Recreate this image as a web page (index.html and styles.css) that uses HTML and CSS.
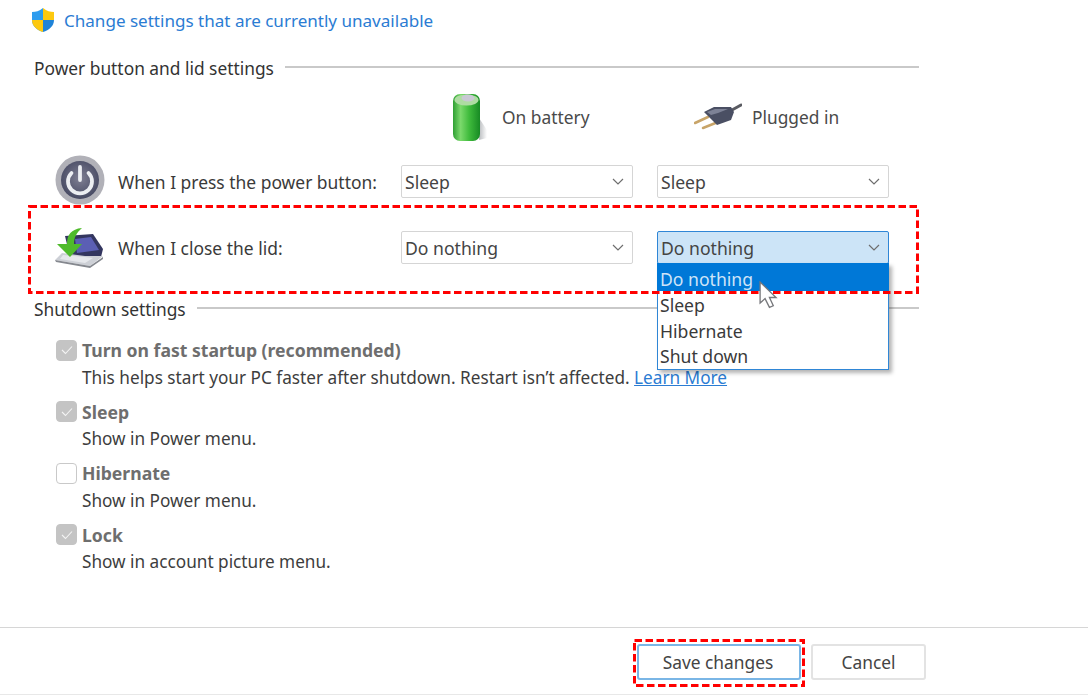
FILE: index.html
```html
<!DOCTYPE html>
<html lang="en">
<head>
<meta charset="utf-8">
<title>System Settings</title>
<link rel="stylesheet" href="styles.css">
</head>
<body>
<main class="page">
  <div class="change-row">
    <svg class="shield" viewBox="0 0 24 26" width="24" height="26">
      <path d="M12 1 C8 4 5 5 1 5 V13 C1 19 6 23 12 25 Z" fill="#2d9cee"/>
      <path d="M12 1 C16 4 19 5 23 5 V13 H12 Z" fill="#fdc90f"/>
      <path d="M1 13 H12 V25 C6 23 1 19 1 13 Z" fill="#fdc90f"/>
      <path d="M12 13 H23 C23 19 18 23 12 25 Z" fill="#1f83d8"/>
    </svg>
    <a class="link change-link">Change settings that are currently unavailable</a>
  </div>

  <div class="section-head head-power"><span>Power button and lid settings</span><i class="rule"></i></div>

  <div class="grid">
    <div class="col-head col-battery">
      <svg viewBox="0 0 36 50" width="36" height="50">
        <defs>
          <linearGradient id="bat" x1="0" x2="1" y1="0" y2="0">
            <stop offset="0" stop-color="#2f9f33"/><stop offset=".28" stop-color="#7bd96c"/>
            <stop offset=".6" stop-color="#3fbb3c"/><stop offset="1" stop-color="#178a24"/>
          </linearGradient>
          <linearGradient id="batsh" x1="0" x2="1" y1="0" y2="0">
            <stop offset="0" stop-color="#b9bcbf"/><stop offset="1" stop-color="#ffffff"/>
          </linearGradient>
        </defs>
        <path d="M28 26 L36 38 L36 46 L28 48 Z" fill="url(#batsh)"/>
        <rect x="2" y="2" width="27" height="47" rx="7" fill="url(#bat)"/>
        <ellipse cx="15.500" cy="8" rx="12" ry="5.500" fill="#aedca2"/>
        <ellipse cx="17" cy="6" rx="6.500" ry="3.500" fill="#c9c8d4"/>
      </svg>
      <span>On battery</span>
    </div>
    <div class="col-head col-plug">
      <svg viewBox="0 0 48 30" width="48" height="30">
        <path d="M1 21 L14 15" stroke="#c8a468" stroke-width="2.500" stroke-linecap="round"/>
        <path d="M9 26 L24 20" stroke="#c8a468" stroke-width="2.500" stroke-linecap="round"/>
        <path d="M38 8 L47 3" stroke="#5a5b62" stroke-width="3" stroke-linecap="round"/>
        <path d="M10 10 L20 5 L37 5 L40 10 L37 18 L23 23 L15 15 Z" fill="#4a4f63"/>
        <path d="M13 10 L21 7 L34 7 L24 11 L17 13 Z" fill="#7d8296"/>
      </svg>
      <span>Plugged in</span>
    </div>

    <svg class="row-icon icon-power" viewBox="0 0 50 50" width="50" height="50">
      <defs>
        <radialGradient id="pw" cx=".5" cy=".45" r=".55">
          <stop offset="0" stop-color="#7f7f93"/><stop offset="1" stop-color="#474a63"/>
        </radialGradient>
      </defs>
      <circle cx="25" cy="25" r="24.500" fill="#b1b1b8"/>
      <circle cx="25" cy="25" r="19" fill="url(#pw)"/>
      <path d="M16.500 18 A12 12 0 1 0 33.500 18" fill="none" stroke="#eceef2" stroke-width="3.800" stroke-linecap="round"/>
      <path d="M25 12 V25" fill="none" stroke="#eceef2" stroke-width="3.800" stroke-linecap="round"/>
    </svg>
    <span class="row-label">When I press the power button:</span>
    <div class="select"><span>Sleep</span><svg class="chev" viewBox="0 0 12 7" width="12" height="7"><path d="M1 1 L6 6 L11 1" fill="none" stroke="#6e6e6e" stroke-width="1.200"/></svg></div>
    <div class="select second"><span>Sleep</span><svg class="chev" viewBox="0 0 12 7" width="12" height="7"><path d="M1 1 L6 6 L11 1" fill="none" stroke="#6e6e6e" stroke-width="1.200"/></svg></div>

    <svg class="row-icon lid" viewBox="0 0 50 44" width="50" height="44">
      <path d="M10 11 L38 9 L48 24 L46 32 L15 32 Z" fill="#33365f"/>
      <path d="M20 14 L36 12 L44 25 L22 28 Z" fill="#5b5fb4"/>
      <path d="M0 35 L7 28 L30 31 L48 31 L35 41 Z" fill="#cdd0d6"/>
      <path d="M8 30 L30 32 L38 33 L30 38 L5 34 Z" fill="#e6e8ec"/>
      <path d="M0 35 L35 41 L48 32 L48 34 L35 43 L1 37 Z" fill="#85888f"/>
      <path d="M27 3 C16 4 12 10 12 19 H2 L15 32 L27 19 H19 C19 13 21 8 27 3 Z" fill="#4fbb2b"/>
    </svg>
    <span class="row-label">When I close the lid:</span>
    <div class="select"><span>Do nothing</span><svg class="chev" viewBox="0 0 12 7" width="12" height="7"><path d="M1 1 L6 6 L11 1" fill="none" stroke="#6e6e6e" stroke-width="1.200"/></svg></div>
    <div class="select second open">
      <span>Do nothing</span><svg class="chev" viewBox="0 0 12 7" width="12" height="7"><path d="M1 1 L6 6 L11 1" fill="none" stroke="#6e6e6e" stroke-width="1.200"/></svg>
      <ul class="menu">
        <li class="active">Do nothing</li>
        <li>Sleep</li>
        <li>Hibernate</li>
        <li>Shut down</li>
      </ul>
    </div>
  </div>

  <div class="section-head head-shutdown"><span>Shutdown settings</span><i class="rule"></i></div>

  <div class="options">
    <div class="option">
      <span class="check on"><svg viewBox="0 0 12 10" width="12" height="10"><path d="M1 5 L4.500 8.500 L11 1.500" fill="none" stroke="#f4f4f4" stroke-width="1.100"/></svg></span>
      <strong>Turn on fast startup (recommended)</strong>
      <span class="desc">This helps start your PC faster after shutdown. Restart isn’t affected. <a class="link learn">Learn More</a></span>
    </div>
    <div class="option">
      <span class="check on"><svg viewBox="0 0 12 10" width="12" height="10"><path d="M1 5 L4.500 8.500 L11 1.500" fill="none" stroke="#f4f4f4" stroke-width="1.100"/></svg></span>
      <strong>Sleep</strong>
      <span class="desc">Show in Power menu.</span>
    </div>
    <div class="option">
      <span class="check"></span>
      <strong>Hibernate</strong>
      <span class="desc">Show in Power menu.</span>
    </div>
    <div class="option">
      <span class="check on"><svg viewBox="0 0 12 10" width="12" height="10"><path d="M1 5 L4.500 8.500 L11 1.500" fill="none" stroke="#f4f4f4" stroke-width="1.100"/></svg></span>
      <strong>Lock</strong>
      <span class="desc">Show in account picture menu.</span>
    </div>
  </div>

  <footer class="footer">
    <button class="btn primary">Save changes</button>
    <button class="btn">Cancel</button>
  </footer>
</main>

<svg class="mark mark-lid" width="891" height="89" viewBox="0 0 891 89"><rect x="1.500" y="1.500" width="888" height="86" fill="none" stroke="#f00" stroke-width="3" stroke-dasharray="7.500 3.500"/></svg>
<svg class="mark mark-save" width="172" height="48" viewBox="0 0 172 48"><rect x="1.500" y="1.500" width="169" height="45" fill="none" stroke="#f00" stroke-width="3" stroke-dasharray="7.500 3.500"/></svg>
<svg class="cursor" viewBox="0 0 20 30" width="22" height="33"><path d="M1 1 V20 L5.500 16 L9.500 24 L13 22.500 L9.500 15 H15.500 Z" fill="#fff" stroke="#77787c" stroke-width="1.200"/></svg>
</body>
</html>
```

FILE: styles.css
```css
* { box-sizing: border-box; }
html, body { margin: 0; padding: 0; background: #fff; }
body {
  width: 1088px;
  height: 695px;
  overflow: hidden;
  position: relative;
  font-family: "Noto Sans", "Open Sans", sans-serif;
  font-size: 17.35px;
  color: #3a3a3a;
}
.page { display: flex; flex-direction: column; height: 695px; }
.page > * { flex: none; }
.link { color: #2b7cd3; }
.change-row { display: flex; align-items: center; height: 28px; margin-top: 6px; padding-left: 31px; gap: 9px; }
.change-link { font-size: 17.06px; }
.shield { flex: none; margin-top: -1px; }

.section-head { display: flex; align-items: center; gap: 11px; margin-left: 34px; width: 885px; height: 24px; color: #333; }
.rule { flex: 1; height: 2px; background: #c9c9c9; margin-top: -2px; }
.head-power { margin-top: 22px; }
.head-shutdown { margin-top: 33px; }

.grid {
  display: grid;
  grid-template-columns: 63px 283px 232px 24px 232px;
  grid-template-rows: 40px 33px 33px;
  row-gap: 33px;
  padding-left: 55px;
  margin-top: 12px;
  align-items: center;
}
.col-head { display: flex; align-items: center; align-self: start; height: 50px; color: #4a4a4a; }
.col-battery { grid-column: 3; padding-left: 50px; gap: 15px; }
.col-plug { grid-column: 5; padding-left: 37px; gap: 10px; }
.row-icon { grid-column: 1; justify-self: start; }
.icon-power { margin-top: -3px; }
.row-label { grid-column: 2; white-space: nowrap; font-size: 17.45px; }
.lid { margin-top: -1px; }

.select {
  grid-column: 3;
  position: relative;
  height: 33px;
  border: 1px solid #d5d5d5;
  border-radius: 2px;
  background: #fff;
  display: flex;
  align-items: center;
  justify-content: space-between;
  padding: 1px 8px 0 3px;
  color: #444;
  font-size: 17.6px;
}
.select.second { grid-column: 5; }
.chev { flex: none; margin-top: -1px; }
.select.open { background: #cce4f7; border-color: #2f86d6; }
.menu {
  list-style: none;
  position: absolute;
  z-index: 2;
  left: -1px;
  top: 31px;
  width: 232px;
  margin: 0;
  padding: 0 0 1px;
  background: #fff;
  border: 1px solid #2f86d6;
  border-top: 0;
  box-shadow: 3px 3px 4px rgba(0,0,0,.3);
  color: #3a3a3a;
}
.menu li { height: 25.500px; line-height: 29px; padding-left: 2px; }
.menu li.active { height: 28px; line-height: 32px; background: #0078d7; color: #cfe4f7; margin-left: -1px; margin-right: -1px; padding-left: 3px; }

.options { display: flex; flex-direction: column; gap: 5.67px; margin-top: 15px; padding-left: 56px; }
.option {
  display: grid;
  grid-template-columns: 26px 1fr;
  grid-template-rows: 28px 28px;
  align-items: center;
}
.option strong { color: #6e6e6e; font-weight: 700; font-size: 17.6px; }
.desc { grid-column: 2; color: #3d3d3d; font-size: 17.2px; margin-top: -2px; }
.learn { text-decoration: underline; }
.check {
  width: 21px;
  height: 21px;
  border-radius: 4px;
  border: 1px solid #c9c9c9;
  background: #fff;
  display: flex;
  align-items: center;
  justify-content: center;
}
.check.on { background: #c4c4c4; border-color: #c4c4c4; }

.footer {
  margin-top: auto;
  height: 68px;
  border-top: 1px solid #d6d6d6;
  border-bottom: 1px solid #e8e8e8;
  display: flex;
  justify-content: flex-end;
  align-items: flex-start;
  gap: 10px;
  padding: 16px 162px 0 0;
}
.btn {
  font: inherit;
  height: 36px;
  width: 115px;
  background: #fff;
  border: 2px solid #e3e3e3;
  border-radius: 3px;
  color: #444;
  padding: 0;
}
.btn.primary { width: 164px; border-color: #7ab6e6; padding-right: 2px; }

.mark { position: absolute; pointer-events: none; z-index: 3; }
.mark-lid { left: 28px; top: 205px; }
.mark-save { left: 633px; top: 639px; }
.cursor { position: absolute; left: 759px; top: 281px; z-index: 4; }
```
